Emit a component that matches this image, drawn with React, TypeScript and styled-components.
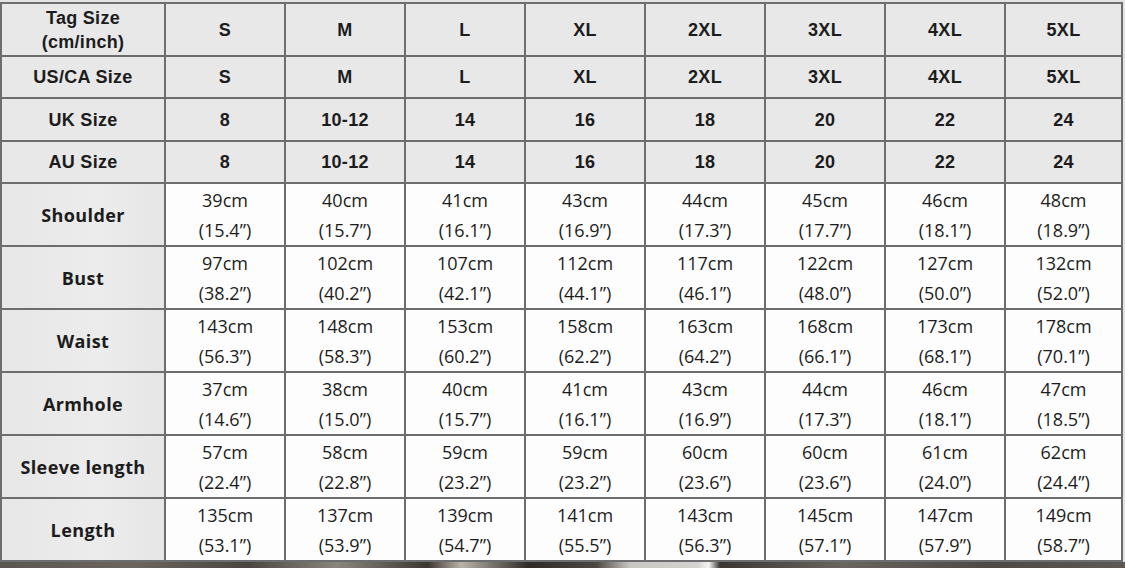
import styled, { createGlobalStyle } from "styled-components";

const GlobalStyle = createGlobalStyle`
  html, body {
    margin: 0;
    padding: 0;
    background: #e4e4e4;
  }
  body {
    width: 1125px;
    height: 568px;
    overflow: hidden;
  }
`;

type Kind = "head" | "label" | "data";

const headRows: { title: string[]; values: string[] }[] = [
  { title: ["Tag Size", "(cm/inch)"], values: ["S", "M", "L", "XL", "2XL", "3XL", "4XL", "5XL"] },
  { title: ["US/CA Size"], values: ["S", "M", "L", "XL", "2XL", "3XL", "4XL", "5XL"] },
  { title: ["UK Size"], values: ["8", "10-12", "14", "16", "18", "20", "22", "24"] },
  { title: ["AU Size"], values: ["8", "10-12", "14", "16", "18", "20", "22", "24"] },
];

const headHeights = [51, 40, 41, 40];

const measures: { name: string; cm: number[]; inch: string[] }[] = [
  {
    name: "Shoulder",
    cm: [39, 40, 41, 43, 44, 45, 46, 48],
    inch: ["15.4", "15.7", "16.1", "16.9", "17.3", "17.7", "18.1", "18.9"],
  },
  {
    name: "Bust",
    cm: [97, 102, 107, 112, 117, 122, 127, 132],
    inch: ["38.2", "40.2", "42.1", "44.1", "46.1", "48.0", "50.0", "52.0"],
  },
  {
    name: "Waist",
    cm: [143, 148, 153, 158, 163, 168, 173, 178],
    inch: ["56.3", "58.3", "60.2", "62.2", "64.2", "66.1", "68.1", "70.1"],
  },
  {
    name: "Armhole",
    cm: [37, 38, 40, 41, 43, 44, 46, 47],
    inch: ["14.6", "15.0", "15.7", "16.1", "16.9", "17.3", "18.1", "18.5"],
  },
  {
    name: "Sleeve length",
    cm: [57, 58, 59, 59, 60, 60, 61, 62],
    inch: ["22.4", "22.8", "23.2", "23.2", "23.6", "23.6", "24.0", "24.4"],
  },
  {
    name: "Length",
    cm: [135, 137, 139, 141, 143, 145, 147, 149],
    inch: ["53.1", "53.9", "54.7", "55.5", "56.3", "57.1", "57.9", "58.7"],
  },
];

export default function App() {
  return (
    <Page>
      <GlobalStyle />
      <Chart>
        {headRows.map((row, i) => (
          <Row key={row.title[0]} $height={headHeights[i]}>
            <Cell $kind="head">
              {row.title.map((t) => (
                <HeadLine key={t} $tight={row.title.length > 1}>
                  {t}
                </HeadLine>
              ))}
            </Cell>
            {row.values.map((v, j) => (
              <Cell key={j} $kind="head">
                <HeadLine>{v}</HeadLine>
              </Cell>
            ))}
          </Row>
        ))}
        {measures.map((m) => (
          <Row key={m.name} $height={61}>
            <Cell $kind="label">{m.name}</Cell>
            {m.cm.map((cm, j) => (
              <Cell key={j} $kind="data">
                <DataLine>{cm}cm</DataLine>
                <DataLine>({m.inch[j]}”)</DataLine>
              </Cell>
            ))}
          </Row>
        ))}
      </Chart>
      <PhotoStrip />
    </Page>
  );
}

const Page = styled.div`
  padding-top: 2px;
  display: flex;
  flex-direction: column;
`;

const Chart = styled.div`
  width: 1123px;
  box-sizing: border-box;
  padding: 2px;
  display: flex;
  flex-direction: column;
  gap: 2px;
  background: #6d6d6d;
`;

const Row = styled.div<{ $height: number }>`
  display: grid;
  grid-template-columns: 162px repeat(7, 118px) 115px;
  gap: 2px;
  height: ${(p) => p.$height}px;
`;

const cellBg: Record<Kind, string> = {
  head: "#e8e8e8",
  label: "linear-gradient(90deg, #e7e7e7, #ececec 60%, #e6e6e6)",
  data: "#fdfdfd",
};

const Cell = styled.div<{ $kind: Kind }>`
  display: flex;
  flex-direction: column;
  align-items: center;
  justify-content: center;
  background: ${(p) => cellBg[p.$kind]};
  color: #1c1c1c;
  text-align: center;
  font-family: ${(p) =>
    p.$kind === "label"
      ? `"Open Sans", "Noto Sans", sans-serif`
      : p.$kind === "head"
      ? `"Liberation Sans", Arial, sans-serif`
      : `"Open Sans", "Noto Sans", sans-serif`};
  font-weight: ${(p) => (p.$kind === "data" ? 400 : 700)};
  font-size: 18px;
  letter-spacing: ${(p) => (p.$kind === "label" ? "0.4px" : "0")};
`;

const HeadLine = styled.div<{ $tight?: boolean }>`
  line-height: ${(p) => (p.$tight ? "24px" : "20px")};
  letter-spacing: 0.3px;
`;

const DataLine = styled.div`
  line-height: 30px;
`;

const PhotoStrip = styled.div`
  height: 8px;
  width: 1125px;
  background: linear-gradient(
    90deg,
    #5a5650 0%,
    #6b655d 12%,
    #4a4540 22%,
    #8a857c 30%,
    #3c3632 38%,
    #b9b3a8 41%,
    #2e2a28 47%,
    #4d4742 53%,
    #c8c6c2 56%,
    #d4d2ce 62%,
    #f4f4f4 63%,
    #3a3633 64%,
    #6a645e 75%,
    #4c4844 88%,
    #5e5954 100%
  );
`;
